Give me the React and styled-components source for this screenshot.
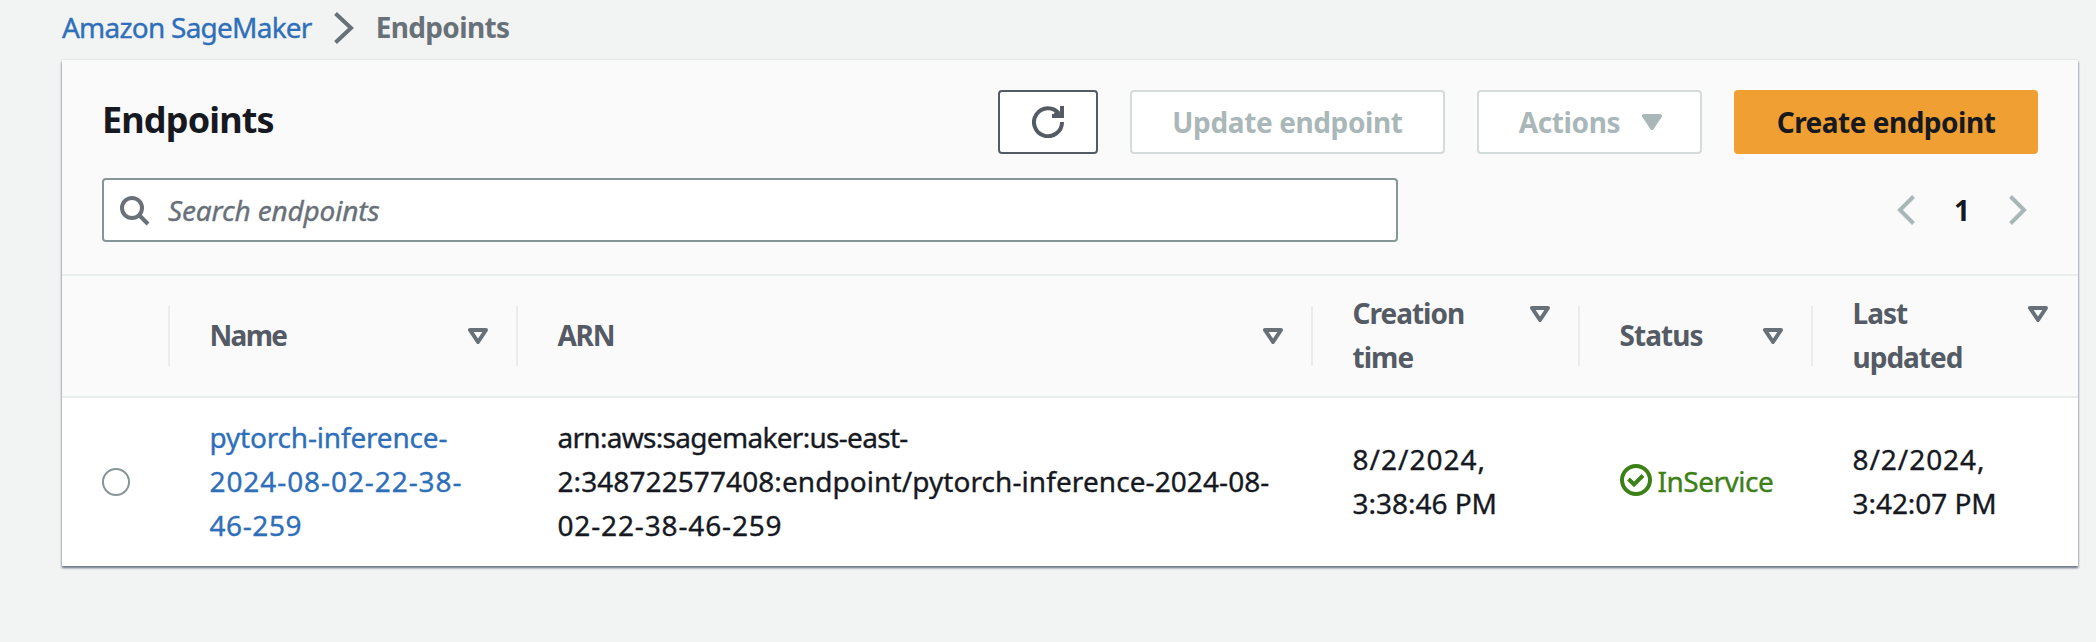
import React from "react";
import styled, { createGlobalStyle, css } from "styled-components";

const GlobalStyle = createGlobalStyle`
  *, *::before, *::after { box-sizing: border-box; }
  body {
    margin: 0;
    background: #f2f3f3;
    color: #16191f;
    font: 400 28px/44px "Noto Sans", "Open Sans", sans-serif;
    overflow: hidden;
  }
  a { color: inherit; text-decoration: none; }
`;

const Text = styled.span`
  letter-spacing: ${(p) => p.$track || 0}px;
  white-space: nowrap;
`;

const Page = styled.main`
  width: 2096px;
  height: 642px;
  padding: 5px 18px 0 62px;
`;

const Breadcrumbs = styled.nav`
  display: flex;
  align-items: center;
  height: 44px;
  margin-bottom: 11px;
  color: #687078;
  font-weight: 700;
`;

const Crumb = styled.a`
  color: #2f6fba;
  font-weight: 400;
  -webkit-text-stroke: 0.35px currentColor;
`;

const CrumbChevron = styled.svg`
  width: 20px;
  height: 32px;
  margin: 2px 22px 0 22px;
`;

const Card = styled.section`
  background: #fff;
  box-shadow: 0 2px 2px 0 rgba(0, 28, 56, 0.36), 1px 2px 2px 0 rgba(0, 28, 56, 0.18),
    -1px 2px 2px 0 rgba(0, 28, 56, 0.18), 0 -1px 1px 0 rgba(0, 28, 36, 0.05);
`;

const CardHeader = styled.header`
  display: grid;
  row-gap: 24px;
  padding: 30px 40px 32px;
  background: #fafafa;
  border-bottom: 2px solid #eaeded;
`;

const HeaderRow = styled.div`
  display: flex;
  align-items: center;
  justify-content: space-between;
  height: 64px;
`;

const Title = styled.h1`
  margin: 0;
  padding-bottom: 4px;
  font-size: 36px;
  line-height: 44px;
  font-weight: 700;
`;

const Actions = styled.div`
  display: flex;
  gap: 32px;
`;

const Button = styled.button`
  display: flex;
  align-items: center;
  justify-content: center;
  width: ${(p) => p.$width}px;
  height: 64px;
  padding: 0 0 1px;
  font: inherit;
  font-weight: 700;
  border: 2px solid #d5dbdb;
  border-radius: 4px;
  background: #fff;
  color: #aab7b8;
  ${(p) => p.$kind === "normal" && css`border-color: #545b64; color: #545b64;`}
  ${(p) => p.$kind === "primary" && css`border-color: #f09f33; background: #f09f33; color: #16191f;`}
`;

const RefreshIcon = styled.svg`
  width: 32px;
  height: 32px;
  margin-top: 1px;
`;

const Caret = styled.svg`
  width: 20px;
  height: 16px;
  margin: 1px -2px 0 22px;
`;

const SearchBox = styled.label`
  display: flex;
  align-items: center;
  width: 1296px;
  height: 64px;
  padding-left: 16px;
  gap: 18px;
  border: 2px solid #879596;
  border-radius: 4px;
  background: #fff;
  color: #687078;
  font-style: italic;
  -webkit-text-stroke: 0.35px currentColor;
`;

const SearchIcon = styled.svg`
  width: 30px;
  height: 30px;
  margin-top: 1px;
`;

const Pagination = styled.div`
  display: flex;
  align-items: center;
  margin-right: 11px;
  gap: 39px;
  font-weight: 700;
`;

const PageChevron = styled.svg`
  width: 18px;
  height: 30px;
`;

const columns = css`
  display: grid;
  grid-template-columns: 106px 348px 795px 267px 233px 267px;
  align-items: center;
`;

const TableHead = styled.div`
  ${columns}
  height: 122px;
  background: #fafafa;
  border-bottom: 2px solid #eaeded;
  color: #545b64;
  font-weight: 700;
`;

const HeadCell = styled.div`
  display: flex;
  align-items: center;
  height: 60px;
  padding: 0 28px 0 39.5px;
  border-left: 2px solid #eaeded;
  &:last-child { padding-right: 30px; }
`;

const HeadLabel = styled.div`
  display: flex;
  flex: 1;
  align-items: flex-start;
  justify-content: space-between;
  padding-bottom: 2px;
`;

const SortIcon = styled.svg`
  width: 20px;
  height: 16px;
  margin-top: 15px;
`;

const TableRow = styled.div`
  ${columns}
  height: 168px;
`;

const Cell = styled.div`
  padding: 0 0 2px 41.5px;
  color: ${(p) => p.$color || "#16191f"};
  -webkit-text-stroke: 0.35px currentColor;
`;

const Radio = styled.span`
  display: block;
  width: 28px;
  height: 28px;
  margin-left: 40px;
  border: 2px solid #879596;
  border-radius: 50%;
  background: #fff;
`;

const Status = styled.div`
  display: flex;
  align-items: center;
  gap: 6px;
`;

const StatusIcon = styled.svg`
  width: 32px;
  height: 32px;
  margin-top: -2px;
`;

function Lines({ items }) {
  return items.map(([text, track]) => (
    <div key={text}><Text $track={track}>{text}</Text></div>
  ));
}

function Chevron({ as: Icon = PageChevron, left, width = 18, height = 30 }) {
  const d = left
    ? `M${width - 1.5} 1.5 L3 ${height / 2} L${width - 1.5} ${height - 1.5}`
    : `M1.5 1.5 L${width - 3} ${height / 2} L1.5 ${height - 1.5}`;
  return (
    <Icon viewBox={`0 0 ${width} ${height}`} fill="none" stroke={Icon === PageChevron ? "#aab7b8" : "#687078"} strokeWidth="4">
      <path d={d} />
    </Icon>
  );
}

const HEADINGS = [
  { key: "name", lines: [["Name", -1.7]] },
  { key: "arn", lines: [["ARN", -1.3]] },
  { key: "creation", lines: [["Creation", -1], ["time", -0.95]] },
  { key: "status", lines: [["Status", -0.95]] },
  { key: "updated", lines: [["Last", -1], ["updated", -1]] },
];

export default function App() {
  return (
    <>
      <GlobalStyle />
      <Page>
        <Breadcrumbs>
          <Crumb href="#"><Text $track={-0.77}>Amazon SageMaker</Text></Crumb>
          <Chevron as={CrumbChevron} width={20} height={32} />
          <Text $track={-0.65}>Endpoints</Text>
        </Breadcrumbs>
        <Card>
          <CardHeader>
            <HeaderRow>
              <Title><Text $track={-0.85}>Endpoints</Text></Title>
              <Actions>
                <Button $width={100} $kind="normal" aria-label="Refresh">
                  <RefreshIcon viewBox="0 0 32 32" fill="none" stroke="currentColor" strokeWidth="4">
                    <path d="M30 16 A14 14 0 1 1 27 7.5" />
                    <path d="M30 0 V10 H20" />
                    <path d="M23 6 L28 10" />
                  </RefreshIcon>
                </Button>
                <Button $width={315}><Text $track={-0.38}>Update endpoint</Text></Button>
                <Button $width={225}>
                  <Text $track={-0.37}>Actions</Text>
                  <Caret viewBox="0 0 20 16"><path d="M2 2 H18 L10 14 Z" fill="#aab7b8" stroke="#aab7b8" strokeWidth="4" strokeLinejoin="round" /></Caret>
                </Button>
                <Button $width={304} $kind="primary"><Text $track={-0.5}>Create endpoint</Text></Button>
              </Actions>
            </HeaderRow>
            <HeaderRow>
              <SearchBox>
                <SearchIcon viewBox="0 0 30 30" fill="none" stroke="#687078" strokeWidth="4">
                  <circle cx="12" cy="12" r="10" />
                  <path d="M19 19 L28 28" />
                </SearchIcon>
                <Text $track={-0.16}>Search endpoints</Text>
              </SearchBox>
              <Pagination>
                <Chevron left />
                <span>1</span>
                <Chevron />
              </Pagination>
            </HeaderRow>
          </CardHeader>
          <TableHead>
            <span />
            {HEADINGS.map((h) => (
              <HeadCell key={h.key}>
                <HeadLabel>
                  <div><Lines items={h.lines} /></div>
                  <SortIcon viewBox="0 0 20 16"><path d="M2 2 H18 L10 14 Z" fill="none" stroke="#687078" strokeWidth="4" strokeLinejoin="round" /></SortIcon>
                </HeadLabel>
              </HeadCell>
            ))}
          </TableHead>
          <TableRow>
            <Radio role="radio" aria-checked="false" />
            <Cell $color="#2f6fba">
              <Lines items={[["pytorch-inference-", -0.18], ["2024-08-02-22-38-", 0.92], ["46-259", 0.58]]} />
            </Cell>
            <Cell>
              <Lines items={[["arn:aws:sagemaker:us-east-", -0.7], ["2:348722577408:endpoint/pytorch-inference-2024-08-", 0.08], ["02-22-38-46-259", 0.85]]} />
            </Cell>
            <Cell><Lines items={[["8/2/2024,", 1.01], ["3:38:46 PM", -0.03]]} /></Cell>
            <Cell $color="#3c8017">
              <Status>
                <StatusIcon viewBox="0 0 32 32" fill="none" stroke="currentColor" strokeWidth="4">
                  <circle cx="16" cy="16" r="14" />
                  <path d="M8.5 15 L14 20.5 L23 11.5" />
                </StatusIcon>
                <Text $track={-0.5}>InService</Text>
              </Status>
            </Cell>
            <Cell><Lines items={[["8/2/2024,", 0.95], ["3:42:07 PM", -0.05]]} /></Cell>
          </TableRow>
        </Card>
      </Page>
    </>
  );
}
